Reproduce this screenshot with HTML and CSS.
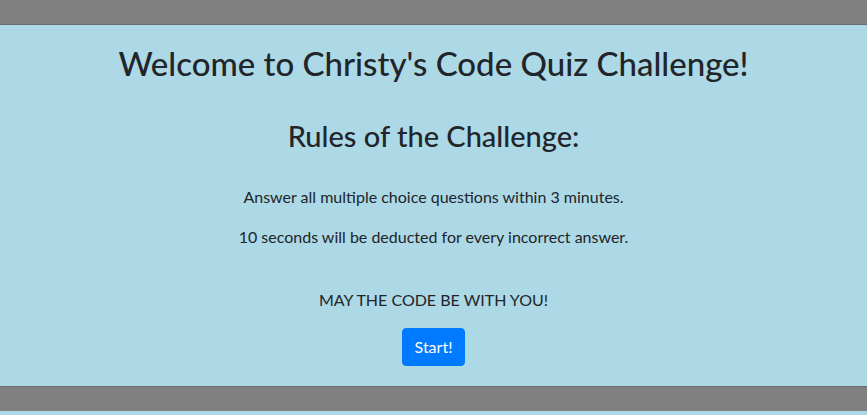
FILE: index.html
```html
<!DOCTYPE html>
<html>
<head>
<meta charset="utf-8">
<link rel="stylesheet" href="styles.css">
</head>
<body>
<header class="bar bar-top"></header>
<main class="intro">
  <h1 class="title">Welcome to Christy's Code Quiz Challenge!</h1>
  <h2 class="subtitle">Rules of the Challenge:</h2>
  <p class="rule">Answer all multiple choice questions within 3 minutes.</p>
  <p class="rule">10 seconds will be deducted for every incorrect answer.</p>
  <p class="motto">MAY THE CODE BE WITH YOU!</p>
  <button class="start-btn">Start!</button>
</main>
<footer class="bar bar-bottom"></footer>
</body>
</html>
```
FILE: styles.css
```css
html, body {
  margin: 0;
  padding: 0;
  background: #add8e6;
}
body {
  font-family: Lato, "Open Sans", sans-serif;
  color: #212529;
  font-size: 16px;
  line-height: 1.5;
}
.bar {
  background: #808080;
}
.bar-top {
  height: 24px;
  border-bottom: 1px solid #6c6c6c;
}
.bar-bottom {
  height: 24px;
  border-top: 1px solid #6c6c6c;
}
.intro {
  height: 361px;
  display: flex;
  flex-direction: column;
  align-items: center;
  text-align: center;
  box-sizing: border-box;
  padding-top: 19px;
}
.title {
  font-size: 33px;
  font-weight: 500;
  line-height: 1.2;
  margin: 0;
}
.subtitle {
  font-size: 29px;
  font-weight: 500;
  line-height: 1.2;
  margin: 35px 0 0;
}
.rule {
  margin: 32px 0 0;
}
.rule + .rule {
  margin-top: 16px;
}
.motto {
  margin: 39px 0 0;
}
.start-btn {
  margin-top: 16px;
  font-family: inherit;
  font-size: 16px;
  line-height: 1.5;
  color: #fff;
  background: #007bff;
  border: 1px solid #007bff;
  border-radius: 4px;
  padding: 6px 12px;
}
```
